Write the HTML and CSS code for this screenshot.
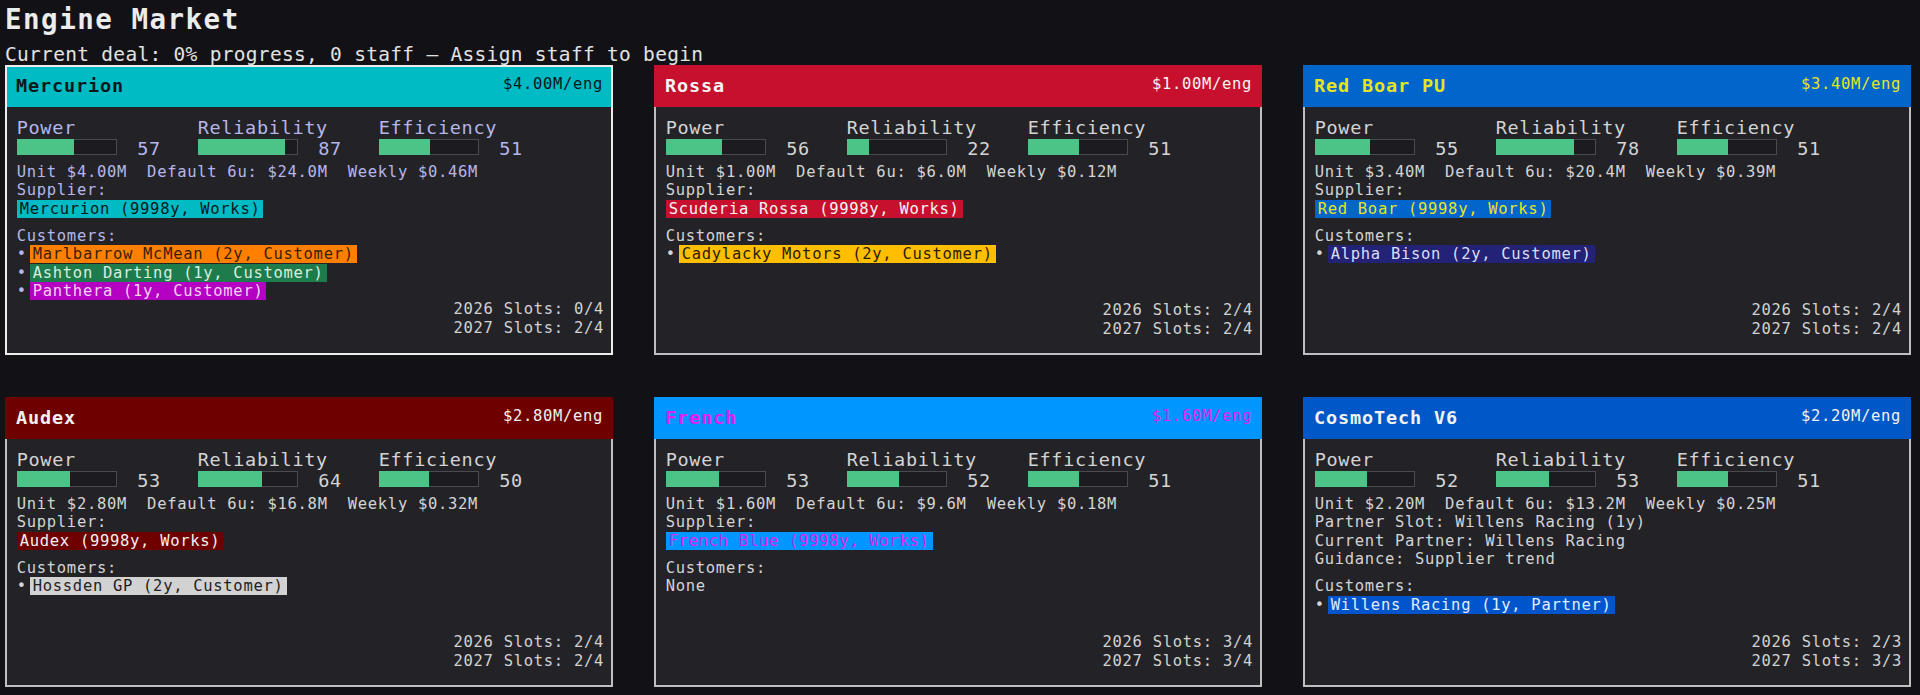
FILE: index.html
```html
<!DOCTYPE html>
<html lang="en">
<head>
<meta charset="utf-8">
<title>Engine Market</title>
<link rel="stylesheet" href="styles.css">
</head>
<body>
<div class="page">
  <h1 class="title">Engine Market</h1>
  <div class="subtitle">Current deal: 0% progress, 0 staff — Assign staff to begin</div>
  <div class="grid">

    <div class="card sel c-merc">
      <div class="head"><span class="name">Mercurion</span><span class="price">$4.00M/eng</span></div>
      <div class="body">
        <div class="stats">
          <div class="stat"><div class="label">Power</div><div class="row"><div class="bar"><div class="fill" style="width:57%"></div></div><span class="num">57</span></div></div>
          <div class="stat"><div class="label">Reliability</div><div class="row"><div class="bar"><div class="fill" style="width:87%"></div></div><span class="num">87</span></div></div>
          <div class="stat"><div class="label">Efficiency</div><div class="row"><div class="bar"><div class="fill" style="width:51%"></div></div><span class="num">51</span></div></div>
        </div>
        <div class="line first">Unit $4.00M  Default 6u: $24.0M  Weekly $0.46M</div>
        <div class="line">Supplier:</div>
        <div class="line"><span class="hl h-merc">Mercurion (9998y, Works)</span></div>
        <div class="line gap">Customers:</div>
        <div class="line">•<span class="hl li h-orange">Marlbarrow McMean (2y, Customer)</span></div>
        <div class="line">•<span class="hl li h-green">Ashton Darting (1y, Customer)</span></div>
        <div class="line">•<span class="hl li h-magenta">Panthera (1y, Customer)</span></div>
        <div class="slots">
          <div class="line">2026 Slots: 0/4</div>
          <div class="line">2027 Slots: 2/4</div>
        </div>
      </div>
    </div>

    <div class="card c-rossa">
      <div class="head"><span class="name">Rossa</span><span class="price">$1.00M/eng</span></div>
      <div class="body">
        <div class="stats">
          <div class="stat"><div class="label">Power</div><div class="row"><div class="bar"><div class="fill" style="width:56%"></div></div><span class="num">56</span></div></div>
          <div class="stat"><div class="label">Reliability</div><div class="row"><div class="bar"><div class="fill" style="width:22%"></div></div><span class="num">22</span></div></div>
          <div class="stat"><div class="label">Efficiency</div><div class="row"><div class="bar"><div class="fill" style="width:51%"></div></div><span class="num">51</span></div></div>
        </div>
        <div class="line first">Unit $1.00M  Default 6u: $6.0M  Weekly $0.12M</div>
        <div class="line">Supplier:</div>
        <div class="line"><span class="hl h-rossa">Scuderia Rossa (9998y, Works)</span></div>
        <div class="line gap">Customers:</div>
        <div class="line">•<span class="hl li h-yellow">Cadylacky Motors (2y, Customer)</span></div>
        <div class="slots">
          <div class="line">2026 Slots: 2/4</div>
          <div class="line">2027 Slots: 2/4</div>
        </div>
      </div>
    </div>

    <div class="card c-boar">
      <div class="head"><span class="name">Red Boar PU</span><span class="price">$3.40M/eng</span></div>
      <div class="body">
        <div class="stats">
          <div class="stat"><div class="label">Power</div><div class="row"><div class="bar"><div class="fill" style="width:55%"></div></div><span class="num">55</span></div></div>
          <div class="stat"><div class="label">Reliability</div><div class="row"><div class="bar"><div class="fill" style="width:78%"></div></div><span class="num">78</span></div></div>
          <div class="stat"><div class="label">Efficiency</div><div class="row"><div class="bar"><div class="fill" style="width:51%"></div></div><span class="num">51</span></div></div>
        </div>
        <div class="line first">Unit $3.40M  Default 6u: $20.4M  Weekly $0.39M</div>
        <div class="line">Supplier:</div>
        <div class="line"><span class="hl h-boar">Red Boar (9998y, Works)</span></div>
        <div class="line gap">Customers:</div>
        <div class="line">•<span class="hl li h-navy">Alpha Bison (2y, Customer)</span></div>
        <div class="slots">
          <div class="line">2026 Slots: 2/4</div>
          <div class="line">2027 Slots: 2/4</div>
        </div>
      </div>
    </div>

    <div class="card c-audex">
      <div class="head"><span class="name">Audex</span><span class="price">$2.80M/eng</span></div>
      <div class="body">
        <div class="stats">
          <div class="stat"><div class="label">Power</div><div class="row"><div class="bar"><div class="fill" style="width:53%"></div></div><span class="num">53</span></div></div>
          <div class="stat"><div class="label">Reliability</div><div class="row"><div class="bar"><div class="fill" style="width:64%"></div></div><span class="num">64</span></div></div>
          <div class="stat"><div class="label">Efficiency</div><div class="row"><div class="bar"><div class="fill" style="width:50%"></div></div><span class="num">50</span></div></div>
        </div>
        <div class="line first">Unit $2.80M  Default 6u: $16.8M  Weekly $0.32M</div>
        <div class="line">Supplier:</div>
        <div class="line"><span class="hl h-audex">Audex (9998y, Works)</span></div>
        <div class="line gap">Customers:</div>
        <div class="line">•<span class="hl li h-grey">Hossden GP (2y, Customer)</span></div>
        <div class="slots">
          <div class="line">2026 Slots: 2/4</div>
          <div class="line">2027 Slots: 2/4</div>
        </div>
      </div>
    </div>

    <div class="card c-french">
      <div class="head"><span class="name">French</span><span class="price">$1.60M/eng</span></div>
      <div class="body">
        <div class="stats">
          <div class="stat"><div class="label">Power</div><div class="row"><div class="bar"><div class="fill" style="width:53%"></div></div><span class="num">53</span></div></div>
          <div class="stat"><div class="label">Reliability</div><div class="row"><div class="bar"><div class="fill" style="width:52%"></div></div><span class="num">52</span></div></div>
          <div class="stat"><div class="label">Efficiency</div><div class="row"><div class="bar"><div class="fill" style="width:51%"></div></div><span class="num">51</span></div></div>
        </div>
        <div class="line first">Unit $1.60M  Default 6u: $9.6M  Weekly $0.18M</div>
        <div class="line">Supplier:</div>
        <div class="line"><span class="hl h-french">French Blue (9998y, Works)</span></div>
        <div class="line gap">Customers:</div>
        <div class="line">None</div>
        <div class="slots">
          <div class="line">2026 Slots: 3/4</div>
          <div class="line">2027 Slots: 3/4</div>
        </div>
      </div>
    </div>

    <div class="card c-cosmo">
      <div class="head"><span class="name">CosmoTech V6</span><span class="price">$2.20M/eng</span></div>
      <div class="body">
        <div class="stats">
          <div class="stat"><div class="label">Power</div><div class="row"><div class="bar"><div class="fill" style="width:52%"></div></div><span class="num">52</span></div></div>
          <div class="stat"><div class="label">Reliability</div><div class="row"><div class="bar"><div class="fill" style="width:53%"></div></div><span class="num">53</span></div></div>
          <div class="stat"><div class="label">Efficiency</div><div class="row"><div class="bar"><div class="fill" style="width:51%"></div></div><span class="num">51</span></div></div>
        </div>
        <div class="line first">Unit $2.20M  Default 6u: $13.2M  Weekly $0.25M</div>
        <div class="line">Partner Slot: Willens Racing (1y)</div>
        <div class="line">Current Partner: Willens Racing</div>
        <div class="line">Guidance: Supplier trend</div>
        <div class="line gap">Customers:</div>
        <div class="line">•<span class="hl li h-willens">Willens Racing (1y, Partner)</span></div>
        <div class="slots">
          <div class="line">2026 Slots: 2/3</div>
          <div class="line">2027 Slots: 3/3</div>
        </div>
      </div>
    </div>

  </div>
</div>
</body>
</html>
```

FILE: styles.css
```css
html, body {
  margin: 0;
  padding: 0;
  background: #121216;
}

body {
  font-family: "DejaVu Sans Mono", "Liberation Mono", monospace;
  color: #e6e6e6;
}

.page {
  padding: 0 5px;
}

.title {
  margin: 0 0 8px 0;
  padding-top: 2px;
  font-size: 27.5px;
  font-weight: bold;
  letter-spacing: 1.5px;
  line-height: 34px;
  color: #ececec;
}

.subtitle {
  font-size: 19.5px;
  letter-spacing: 0.3px;
  line-height: 21px;
  color: #e2e2e2;
  white-space: nowrap;
}

.grid {
  display: grid;
  grid-template-columns: repeat(3, 608px);
  grid-auto-rows: 290px;
  column-gap: 41px;
  row-gap: 42px;
}

.card {
  display: flex;
  flex-direction: column;
  background: #232327;
  box-sizing: border-box;
  --tc: #d4d4d4;
}

.head {
  flex: none;
  height: 42px;
  box-sizing: border-box;
  padding: 10px 10px 0 11px;
  display: flex;
  justify-content: space-between;
  align-items: flex-start;
  background: var(--hc);
  color: var(--ht);
}

.name {
  font-weight: bold;
  font-size: 18.5px;
  letter-spacing: 0.86px;
}

.price {
  font-size: 15.5px;
  letter-spacing: 0.67px;
}

.body {
  flex: 1;
  display: flex;
  flex-direction: column;
  border: 2px solid #bfbfc2;
  border-top: 0;
  padding: 11px 7px 15px 9.7px;
  color: var(--tc);
  min-height: 0;
}

.card.sel {
  border: 2px solid #ececec;
  --tc: #b6b6ea;
}

.card.sel .head {
  height: 40px;
  padding: 8px 8px 0 9px;
}

.card.sel .body {
  border: 0;
  padding-bottom: 17px;
}

.stats {
  display: grid;
  grid-template-columns: repeat(3, 181px);
}

.label {
  font-size: 18.5px;
  letter-spacing: 0.7px;
  line-height: 20px;
}

.row {
  display: flex;
  align-items: flex-start;
  margin-top: 1.3px;
}

.bar {
  width: 100px;
  height: 16px;
  background: #1c1c20;
  box-shadow: inset 0 0 0 1px #4a4a50;
  flex: none;
}

.fill {
  height: 100%;
  background: #4cc487;
}

.num {
  margin-left: 20.6px;
  font-size: 18.5px;
  letter-spacing: 0.7px;
  line-height: 20px;
}

.line {
  font-size: 15.5px;
  letter-spacing: 0.7px;
  line-height: 18.3px;
  white-space: pre;
}

.line.first {
  margin-top: 3.9px;
}

.line.gap {
  margin-top: 9.1px;
}

.hl {
  padding: 0 3px;
}

.hl.li {
  margin-left: 3px;
}

.slots {
  margin-top: auto;
  text-align: right;
  color: #d2d2d2;
}

/* header / supplier colours */
.c-merc   { --hc: #00bac4; --ht: #08181b; }
.c-rossa  { --hc: #c6102d; --ht: #f4f4f4; }
.c-boar   { --hc: #0066cc; --ht: #e6e41e; }
.c-audex  { --hc: #6e0000; --ht: #f0f0f0; }
.c-french { --hc: #0096ff; --ht: #e01ef0; }
.c-cosmo  { --hc: #0057c8; --ht: #f2f2f2; }

.h-merc    { background: #00bac4; color: #08181b; }
.h-rossa   { background: #c6102d; color: #f4f4f4; }
.h-boar    { background: #0066cc; color: #e6e41e; }
.h-audex   { background: #6e0000; color: #f0f0f0; }
.h-french  { background: #0096ff; color: #e01ef0; }

/* customer colours */
.h-orange  { background: #ff8000; color: #3a2000; }
.h-green   { background: #1e7b4b; color: #d7eedf; }
.h-magenta { background: #b400c2; color: #f6d0f6; }
.h-yellow  { background: #ffbf00; color: #2a2000; }
.h-navy    { background: #222277; color: #dcdcf4; }
.h-grey    { background: #d2d2d2; color: #1e1e1e; }
.h-willens { background: #0055cc; color: #e0ecff; }
```
